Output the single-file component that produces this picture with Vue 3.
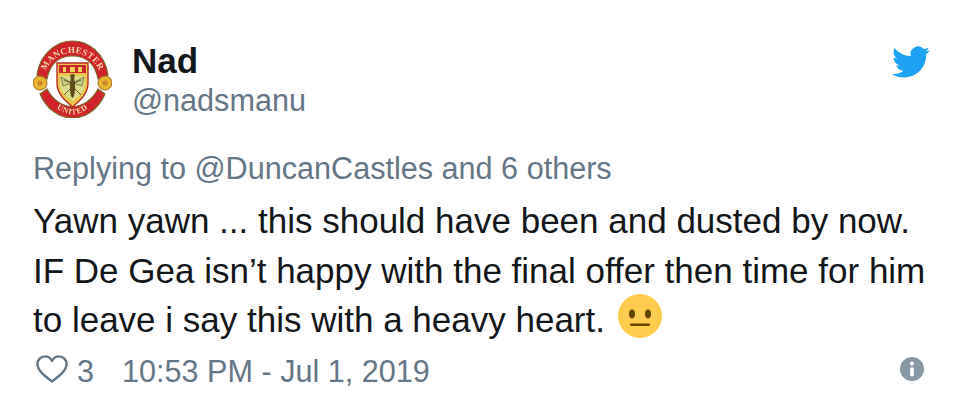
<script setup>
const lines = [
  'Yawn yawn ... this should have been and dusted by now.',
  'IF De Gea isn’t happy with the final offer then time for him',
  'to leave i say this with a heavy heart.'
]
</script>

<template>
  <div class="card">
    <header class="head">
      <svg class="crest" viewBox="13 10 79 78" aria-hidden="true">
        <defs>
          <path id="arcTop" d="M24 47 A28.9 28.9 0 0 1 81 47" />
          <path id="arcBot" d="M27 68 C35 79 45 84.5 52.5 84.5 C60 84.5 70 79 78 68" />
        </defs>
        <path d="M17 45 C20 24 36 11 52.5 11 C69 11 85 24 88 45 L78 49 C75 33 65 26 52.5 26 C40 26 30 33 27 49 Z" fill="#d1232a" stroke="#7d6a2c" stroke-width="1.2" />
        <path d="M20 64 L27 59 C33 70 42 76 52.5 77 C63 76 72 70 78 59 L85 64 C78 80 65 88 52.5 88 C40 88 27 80 20 64 Z" fill="#d1232a" stroke="#7d6a2c" stroke-width="1.2" />
        <text class="ctext" font-size="9" letter-spacing=".3"><textPath href="#arcTop" startOffset="50%" text-anchor="middle">MANCHESTER</textPath></text>
        <text class="ctext" font-size="8" letter-spacing=".6"><textPath href="#arcBot" startOffset="50%" text-anchor="middle">UNITED</textPath></text>
        <path d="M37 33 H68 V53 C68 65 58 72 52.5 77 C47 72 37 65 37 53 Z" fill="#ecc64a" stroke="#b92a26" stroke-width="1.4" />
        <path d="M39 35 H66 V43 H39 Z" fill="#c9262b" />
        <path d="M43 42 V37 H46 V42 M50 42 V37 H55 V42 M58 42 V37 H62 V42" fill="#efcf55" />
        <path d="M40 46 H65 V55 C65 62 57 67 52.5 71 C48 67 40 62 40 55 Z" fill="#dcdc8e" />
        <path d="M52 53 L41 47 L43 56 Z M53 53 L64 47 L62 56 Z" fill="#c6cd86" stroke="#6b5a26" stroke-width=".7" />
        <ellipse cx="52.5" cy="57" rx="2.6" ry="11" fill="#5f4d1c" />
        <circle cx="52.5" cy="46.5" r="2.4" fill="#5f4d1c" />
        <path d="M51 58 L44 65 M54 58 L61 65 M51 53 L44 50 M54 53 L61 50" stroke="#5f4d1c" stroke-width=".9" fill="none" />
        <circle cx="20" cy="53" r="7" fill="#e7b52e" stroke="#a5681b" stroke-width="1" />
        <circle cx="85" cy="53" r="7" fill="#e7b52e" stroke="#a5681b" stroke-width="1" />
        <circle cx="20" cy="53" r="2.6" fill="#c8862a" />
        <circle cx="85" cy="53" r="2.6" fill="#c8862a" />
      </svg>
      <div class="who">
        <div class="name">Nad</div>
        <div class="handle">@nadsmanu</div>
      </div>
      <svg class="bird" viewBox="0 0 24 24" aria-hidden="true">
        <path fill="#1da1f2" d="M23.953 4.57a10 10 0 01-2.825.775 4.958 4.958 0 002.163-2.723c-.951.555-2.005.959-3.127 1.184a4.92 4.92 0 00-8.384 4.482C7.69 8.095 4.067 6.13 1.64 3.162a4.822 4.822 0 00-.666 2.475c0 1.71.87 3.213 2.188 4.096a4.904 4.904 0 01-2.228-.616v.06a4.923 4.923 0 003.946 4.827 4.996 4.996 0 01-2.212.085 4.936 4.936 0 004.604 3.417 9.867 9.867 0 01-6.102 2.105c-.39 0-.779-.023-1.17-.067a13.995 13.995 0 007.557 2.209c9.053 0 13.998-7.496 13.998-13.985 0-.21 0-.42-.015-.63A9.935 9.935 0 0024 4.59z" />
      </svg>
    </header>

    <div class="reply">Replying to @DuncanCastles and 6 others</div>

    <div class="body">
      <div v-for="(l, i) in lines" :key="i" class="line">
        {{ l }}
        <svg v-if="i === 2" class="emoji" viewBox="0 0 44 44" aria-hidden="true">
          <circle cx="22" cy="22" r="22" fill="#ffcc4d" />
          <ellipse cx="14" cy="20" rx="3" ry="4.4" fill="#664500" />
          <ellipse cx="30" cy="20" rx="3" ry="4.4" fill="#664500" />
          <rect x="12" y="29.5" width="20" height="2.4" rx="1.2" fill="#664500" />
        </svg>
      </div>
    </div>

    <footer class="foot">
      <svg class="heart" viewBox="0 0 32 28" aria-hidden="true">
        <path d="M16 26.5 C9 21 1.4 15.5 1.4 9 C1.4 4.8 4.8 1.4 9 1.4 C12 1.4 14.8 3.4 16 6 C17.2 3.4 20 1.4 23 1.4 C27.2 1.4 30.6 4.8 30.6 9 C30.6 15.5 23 21 16 26.5 Z" fill="none" stroke="#657786" stroke-width="2.4" stroke-linejoin="round" />
      </svg>
      <span class="count">3</span>
      <span class="time">10:53 PM - Jul 1, 2019</span>
      <svg class="info" viewBox="0 0 24 24" aria-hidden="true">
        <circle cx="12" cy="12" r="12" fill="#8899a6" />
        <circle cx="12" cy="6.6" r="2.1" fill="#fff" />
        <rect x="10.2" y="10.2" width="3.6" height="9.4" rx="1.4" fill="#fff" />
      </svg>
    </footer>
  </div>
</template>

<style scoped>
.card {
  width: 969px;
  height: 407px;
  box-sizing: border-box;
  padding: 40px 39px 0 33px;
  background: #fff;
  font-family: "Liberation Sans", Arial, sans-serif;
  color: #14171a;
  overflow: hidden;
}
.head {
  display: flex;
  align-items: flex-start;
  height: 80px;
}
.crest {
  width: 79px;
  height: 78px;
  flex: none;
  filter: blur(0.35px);
}
.ctext {
  font-family: "Liberation Serif", serif;
  font-weight: 700;
  fill: #f3d9a6;
}
.who {
  margin-left: 20px;
  flex: 1;
}
.name {
  font-size: 35px;
  font-weight: 700;
  line-height: 41px;
}
.handle {
  margin-top: 1px;
  font-size: 30.6px;
  line-height: 36px;
  color: #657786;
}
.bird {
  width: 38px;
  height: 38px;
  margin-top: 3px;
  flex: none;
}
.reply {
  margin-top: 28px;
  font-size: 30.6px;
  line-height: 40px;
  color: #657786;
}
.body {
  margin-top: 8px;
  font-size: 35px;
  line-height: 49.5px;
}
.line {
  white-space: nowrap;
  display: flex;
  align-items: center;
  gap: 13px;
}
.emoji {
  width: 44px;
  height: 44px;
  align-self: flex-start;
  margin-top: -1px;
}
.foot {
  display: flex;
  align-items: center;
  margin-top: 6.5px;
  height: 40px;
  font-size: 30.6px;
  color: #657786;
}
.heart {
  width: 32px;
  height: 28px;
  margin-left: 3px;
  align-self: flex-start;
  margin-top: 4px;
}
.count {
  margin-left: 9px;
}
.time {
  margin-left: 28px;
  flex: 1;
}
.info {
  width: 24px;
  height: 24px;
  margin-right: 6px;
  align-self: flex-start;
  margin-top: 6px;
}
</style>
